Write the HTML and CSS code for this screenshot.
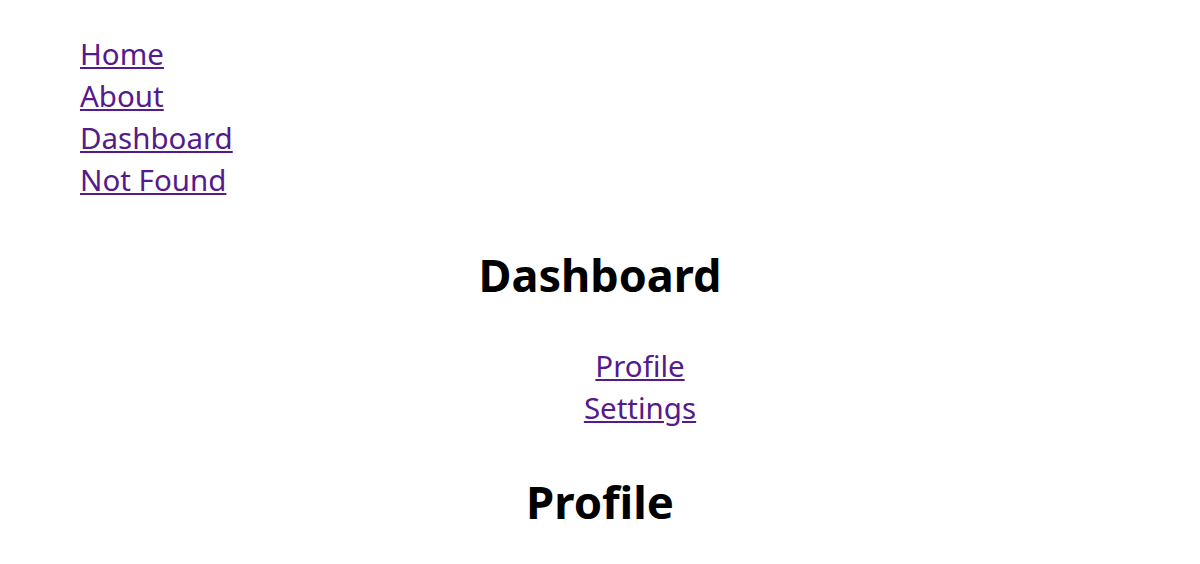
FILE: index.html
```html
<!DOCTYPE html>
<html>
<head>
<meta charset="utf-8">
<link rel="stylesheet" href="styles.css">
</head>
<body>
<nav class="nav">
  <ul class="nav-list">
    <li><a class="link" href="#home">Home</a></li>
    <li><a class="link" href="#about">About</a></li>
    <li><a class="link" href="#dashboard">Dashboard</a></li>
    <li><a class="link" href="#notfound">Not Found</a></li>
  </ul>
</nav>
<main class="main">
  <h1 class="title">Dashboard</h1>
  <ul class="sub-list">
    <li><a class="link" href="#profile">Profile</a></li>
    <li><a class="link" href="#settings">Settings</a></li>
  </ul>
  <h2 class="subtitle">Profile</h2>
</main>
</body>
</html>
```
FILE: styles.css
```css
html, body {
  margin: 0;
  padding: 0;
  background: #fff;
}
body {
  font-family: "Noto Sans", "Open Sans", sans-serif;
  color: #000;
}
.nav-list,
.sub-list {
  list-style: none;
  margin: 0;
  padding: 0 0 0 80px;
  font-size: 29.5px;
  line-height: 42px;
}
.nav-list {
  padding-top: 33px;
}
.link {
  color: #551a8b;
  text-decoration: underline;
}
.main {
  text-align: center;
}
.title {
  margin: 39px 0 0;
  font-size: 45px;
  line-height: 70px;
  font-weight: 700;
}
.sub-list {
  margin-top: 35px;
}
.subtitle {
  margin: 37px 0 0;
  font-size: 45.5px;
  line-height: 70px;
  font-weight: 700;
}
```
